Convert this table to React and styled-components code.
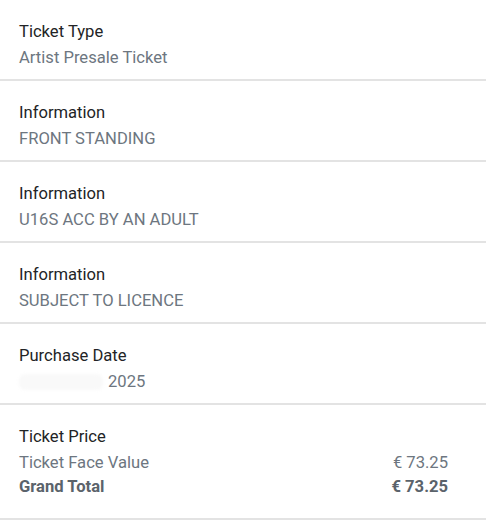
import React from "react";
import styled, { createGlobalStyle } from "styled-components";

const GlobalStyle = createGlobalStyle`
  html, body {
    margin: 0;
    padding: 0;
    background: #ffffff;
  }
  body {
    font-family: Roboto, "Noto Sans", "Liberation Sans", sans-serif;
    -webkit-font-smoothing: antialiased;
  }
`;

const List = styled.div`
  display: flex;
  flex-direction: column;
  width: 486px;
`;

// one block: title + value, divider under it
const Section = styled.div`
  display: flex;
  flex-direction: column;
  padding: 20px 19px ${(p) => (p.$tall ? "19px" : "9px")} 19px;
  border-bottom: 2px solid #e3e3e3;
`;

const Title = styled.div`
  font-size: 16.6px;
  line-height: 24px;
  color: #222426;
`;

const Value = styled.div`
  margin-top: 2px;
  font-size: 16.6px;
  line-height: 24px;
  color: #6d7680;
  display: flex;
  align-items: center;
`;

// blurred out part of the date
const Hidden = styled.span`
  display: inline-block;
  width: 84px;
  height: 16px;
  margin-right: 5px;
  background: #f9f9f9;
  border-radius: 6px;
  filter: blur(1.5px);
`;

const PriceRows = styled.div`
  display: flex;
  flex-direction: column;
  margin-top: 2px;
  padding-right: 19px;
`;

const PriceRow = styled.div`
  display: flex;
  justify-content: space-between;
  font-size: 16.6px;
  line-height: 24px;
  color: ${(p) => (p.$total ? "#5b636b" : "#6d7680")};
  font-weight: ${(p) => (p.$total ? 700 : 400)};
`;

const infoRows = [
  { title: "Ticket Type", value: "Artist Presale Ticket" },
  { title: "Information", value: "FRONT STANDING" },
  { title: "Information", value: "U16S ACC BY AN ADULT" },
  { title: "Information", value: "SUBJECT TO LICENCE" },
];

export default function App() {
  return (
    <>
      <GlobalStyle />
      <List>
        {infoRows.map((r, i) => (
          <Section key={i}>
            <Title>{r.title}</Title>
            <Value>{r.value}</Value>
          </Section>
        ))}
        <Section>
          <Title>Purchase Date</Title>
          <Value>
            <Hidden />
            2025
          </Value>
        </Section>
        <Section $tall>
          <Title>Ticket Price</Title>
          <PriceRows>
            <PriceRow>
              <span>Ticket Face Value</span>
              <span>€ 73.25</span>
            </PriceRow>
            <PriceRow $total>
              <span>Grand Total</span>
              <span>€ 73.25</span>
            </PriceRow>
          </PriceRows>
        </Section>
      </List>
    </>
  );
}
